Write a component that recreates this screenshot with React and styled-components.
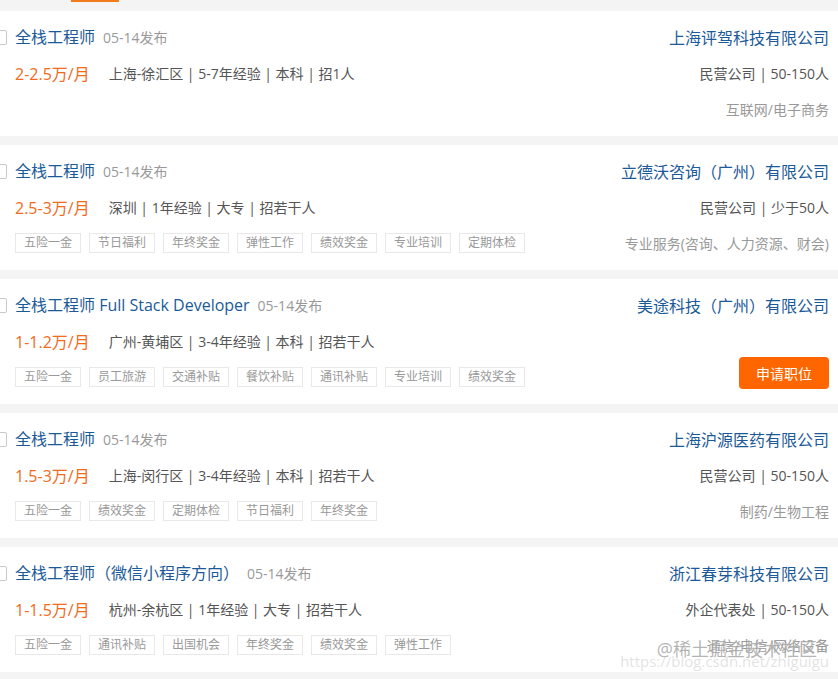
import React from "react";
import styled, { createGlobalStyle } from "styled-components";

const Global = createGlobalStyle`
  html, body { margin: 0; padding: 0; background: #f4f4f4; }
  body {
    font-family: "Segoe UI", "Open Sans", "Noto Sans CJK SC", sans-serif;
    overflow: hidden;
  }
`;

const Page = styled.div`
  width: 838px;
  height: 679px;
  position: relative;
  overflow: hidden;
  background: #f4f4f4;
`;

const TabStrip = styled.div`
  height: 11px;
  display: flex;
`;

const ActiveTab = styled.div`
  margin-left: 71px;
  width: 48px;
  height: 2px;
  background: #f07b1d;
`;

const List = styled.div`
  display: flex;
  flex-direction: column;
  gap: 9px;
  margin-left: -8px;
`;

const Card = styled.div`
  background: #fff;
  height: 125px;
  box-sizing: border-box;
  padding: 16px 9px 0 0;
  display: grid;
  grid-template-columns: 14px 1fr auto;
  grid-template-rows: 20px 20px 20px;
  column-gap: 9px;
  row-gap: 16px;
  align-items: center;
`;

const Check = styled.span`
  width: 13px;
  height: 13px;
  border: 1px solid #c9c9c9;
  border-radius: 2px;
  background: #fff;
  grid-row: 1;
  grid-column: 1;
`;

const Left = styled.div`
  grid-column: 2;
  display: flex;
  align-items: center;
  white-space: nowrap;
  min-width: 0;
`;

const Right = styled.div`
  grid-column: 3;
  display: flex;
  align-items: center;
  justify-content: flex-end;
  white-space: nowrap;
  height: 20px;
`;

const Title = styled.span`
  font-size: 16px;
  color: #1b5a98;
  line-height: 20px;
`;

const Date = styled.span`
  font-size: 14px;
  color: #999;
  margin-left: 8px;
`;

const Salary = styled.span`
  font-size: 16px;
  color: #f26a1b;
  margin-right: 19px;
`;

const Info = styled.span`
  font-size: 14px;
  color: #555;
`;

const Company = styled.span`
  font-size: 16px;
  color: #1b5a98;
`;

const CompanyInfo = styled.span`
  font-size: 14px;
  color: #555;
`;

const Industry = styled.span`
  font-size: 14px;
  color: #999;
`;

const Tags = styled.div`
  display: flex;
  gap: 8px;
`;

const Tag = styled.span`
  box-sizing: border-box;
  height: 20px;
  line-height: 18px;
  padding: 0 8px;
  border: 1px solid #e8e8e8;
  font-size: 12px;
  color: #999;
`;

const ApplyButton = styled.button`
  width: 90px;
  height: 32px;
  margin-bottom: 8px;
  border: none;
  border-radius: 4px;
  background: #ff6600;
  color: #fff;
  font-family: inherit;
  font-size: 14px;
  cursor: pointer;
`;

const Watermark = styled.div`
  position: absolute;
  right: 9px;
  bottom: 10px;
  display: flex;
  flex-direction: column;
  align-items: flex-end;
  pointer-events: none;
`;

const WatermarkLine = styled.span`
  font-size: ${(p) => p.$size}px;
  color: ${(p) => p.$color};
  line-height: ${(p) => p.$lh}px;
  margin-right: ${(p) => p.$mr || 0}px;
  text-shadow: 0 0 2px rgba(255, 255, 255, 0.8);
`;

const jobs = [
  {
    title: "全栈工程师",
    salary: "2-2.5万/月",
    info: "上海-徐汇区 | 5-7年经验 | 本科 | 招1人",
    company: "上海评驾科技有限公司",
    companyInfo: "民营公司 | 50-150人",
    industry: "互联网/电子商务",
    tags: [],
  },
  {
    title: "全栈工程师",
    salary: "2.5-3万/月",
    info: "深圳 | 1年经验 | 大专 | 招若干人",
    company: "立德沃咨询（广州）有限公司",
    companyInfo: "民营公司 | 少于50人",
    industry: "专业服务(咨询、人力资源、财会)",
    tags: ["五险一金", "节日福利", "年终奖金", "弹性工作", "绩效奖金", "专业培训", "定期体检"],
  },
  {
    title: "全栈工程师 Full Stack Developer",
    salary: "1-1.2万/月",
    info: "广州-黄埔区 | 3-4年经验 | 本科 | 招若干人",
    company: "美途科技（广州）有限公司",
    companyInfo: "",
    industry: "",
    apply: true,
    tags: ["五险一金", "员工旅游", "交通补贴", "餐饮补贴", "通讯补贴", "专业培训", "绩效奖金"],
  },
  {
    title: "全栈工程师",
    salary: "1.5-3万/月",
    info: "上海-闵行区 | 3-4年经验 | 本科 | 招若干人",
    company: "上海沪源医药有限公司",
    companyInfo: "民营公司 | 50-150人",
    industry: "制药/生物工程",
    tags: ["五险一金", "绩效奖金", "定期体检", "节日福利", "年终奖金"],
  },
  {
    title: "全栈工程师（微信小程序方向）",
    salary: "1-1.5万/月",
    info: "杭州-余杭区 | 1年经验 | 大专 | 招若干人",
    company: "浙江春芽科技有限公司",
    companyInfo: "外企代表处 | 50-150人",
    industry: "通信/电信/网络设备",
    tags: ["五险一金", "通讯补贴", "出国机会", "年终奖金", "绩效奖金", "弹性工作"],
  },
];

function JobCard({ job }) {
  return (
    <Card>
      <Check />
      <Left>
        <Title>{job.title}</Title>
        <Date>05-14发布</Date>
      </Left>
      <Right>
        <Company>{job.company}</Company>
      </Right>
      <Left>
        <Salary>{job.salary}</Salary>
        <Info>{job.info}</Info>
      </Left>
      <Right>
        <CompanyInfo>{job.companyInfo}</CompanyInfo>
      </Right>
      <Left>
        <Tags>
          {job.tags.map((t, i) => (
            <Tag key={i}>{t}</Tag>
          ))}
        </Tags>
      </Left>
      <Right>
        {job.apply ? <ApplyButton>申请职位</ApplyButton> : <Industry>{job.industry}</Industry>}
      </Right>
    </Card>
  );
}

export default function App() {
  return (
    <Page>
      <Global />
      <TabStrip>
        <ActiveTab />
      </TabStrip>
      <List>
        {jobs.map((j, i) => (
          <JobCard key={i} job={j} />
        ))}
      </List>
      <Watermark>
        <WatermarkLine $size={18} $color="rgba(130,130,130,0.6)" $lh={8} $mr={12}>@稀土掘金技术社区</WatermarkLine>
        <WatermarkLine $size={15} $color="rgba(170,170,170,0.35)" $lh={16}>https://blog.csdn.net/zhiguigu</WatermarkLine>
      </Watermark>
    </Page>
  );
}
